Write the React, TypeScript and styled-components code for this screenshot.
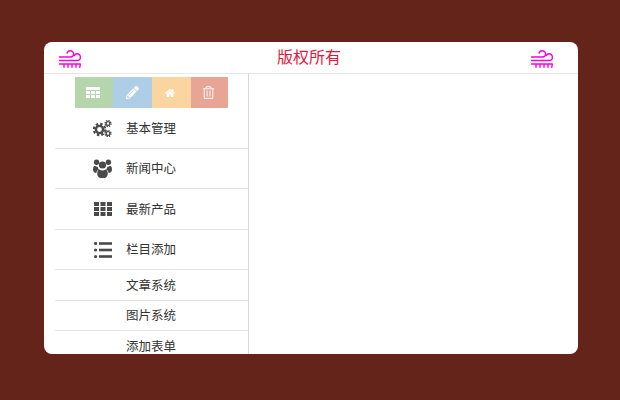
import React from "react";
import styled, { createGlobalStyle } from "styled-components";
import { FaPencilAlt, FaHome, FaRegTrashAlt } from "react-icons/fa";

const Global = createGlobalStyle`
  html, body { margin: 0; padding: 0; background: #64241a; }
  body { font-family: "Liberation Sans", "Noto Sans CJK SC", sans-serif; }
`;

const Page = styled.div`
  width: 620px;
  height: 400px;
  box-sizing: border-box;
  padding: 42px 42px 46px 44px;
  background: #64241a;
  display: flex;
`;

const Card = styled.div`
  flex: 1;
  background: #fff;
  border-radius: 8px;
  overflow: hidden;
  display: flex;
  flex-direction: column;
`;

const Header = styled.header`
  height: 32px;
  flex: none;
  box-sizing: border-box;
  border-bottom: 1px solid #e8e8e8;
  padding: 0 25px 0 15px;
  display: flex;
  align-items: center;
  justify-content: space-between;
`;

const Title = styled.h1`
  margin: 0 0 0 6px;
  font-size: 16px;
  font-weight: 400;
  line-height: 30px;
  color: #e2173c;
`;

const WindMark = styled.svg`
  width: 22px;
  height: 18px;
  flex: none;
  margin-top: 3px;
`;

const Body = styled.div`
  flex: 1;
  min-height: 0;
  display: flex;
`;

const Sidebar = styled.aside`
  width: 205px;
  box-sizing: border-box;
  padding: 3px 0 0 11px;
  border-right: 1px solid #d9d9d9;
  overflow: hidden;
`;

const Shortcuts = styled.div`
  display: flex;
  height: 31px;
  margin-left: 20px;
  width: 153px;
`;

const Shortcut = styled.div<{ $bg: string; $w: number; $size: number; $nudge?: number; $fade?: boolean }>`
  width: ${(p) => p.$w}px;
  box-sizing: border-box;
  padding-right: ${(p) => p.$nudge ?? 0}px;
  background: ${(p) => p.$bg};
  color: ${(p) => (p.$fade ? "rgba(255,255,255,0.75)" : "#fff")};
  display: flex;
  align-items: center;
  justify-content: center;
  font-size: ${(p) => p.$size}px;
`;

const MainRow = styled.div<{ $h: number }>`
  height: ${(p) => p.$h}px;
  box-sizing: border-box;
  border-bottom: 1px solid #e4e4e4;
  display: flex;
  align-items: center;
  color: #333;
  font-size: 12.5px;
`;

const IconSlot = styled.span`
  width: 71px;
  box-sizing: border-box;
  padding-right: 14px;
  display: flex;
  justify-content: flex-end;
  color: #4a4a4a;
`;

const RowLabel = styled.span`
  margin-bottom: 2px;
`;

const SubRow = styled.div<{ $h: number }>`
  height: ${(p) => p.$h}px;
  box-sizing: border-box;
  border-bottom: 1px solid #e4e4e4;
  padding-left: 71px;
  display: flex;
  align-items: center;
  color: #333;
  font-size: 12.5px;
`;

const Content = styled.main`
  flex: 1;
`;

const Wind = () => (
  <WindMark viewBox="0 0 22 18" fill="none" stroke="#fa00e0" strokeWidth="1.4">
    <path d="M0 7H11.5C13.2 7 14.6 5.8 14.6 4C14.6 2.2 13.2 0.8 11.4 0.8C9.6 0.8 8.2 2 8 3.6" />
    <path d="M0 10.5H18C20 10.5 21.4 9 21.4 7.2C21.4 5.2 19.9 3.8 18.2 3.8C16.6 3.8 15.4 4.8 15.1 6.2" />
    <path d="M0 14H21.8" />
    <path d="M5 14V17.8M9 14V17.8M13 14V17.8M17 14V17.8M21.4 14L20.6 17.8" />
  </WindMark>
);

const TableGlyph = () => (
  <svg width="14" height="11" viewBox="0 0 14 11" fill="currentColor">
    <rect x="0" y="0" width="14" height="3" />
    <rect x="0" y="4" width="4" height="3" />
    <rect x="5" y="4" width="4" height="3" />
    <rect x="10" y="4" width="4" height="3" />
    <rect x="0" y="8" width="4" height="3" />
    <rect x="5" y="8" width="4" height="3" />
    <rect x="10" y="8" width="4" height="3" />
  </svg>
);

const CogsGlyph = () => (
  <svg width="19" height="17" viewBox="0 0 19 17" fill="none" stroke="currentColor">
    <circle cx="6.5" cy="9.5" r="3.6" strokeWidth="2.4" />
    <circle cx="6.5" cy="9.5" r="5.7" strokeWidth="2.2" strokeDasharray="2.4 2.08" />
    <circle cx="15" cy="3.5" r="1.9" strokeWidth="1.4" />
    <circle cx="15" cy="3.5" r="3" strokeWidth="1.3" strokeDasharray="1.3 1.06" />
    <circle cx="15" cy="13.5" r="1.9" strokeWidth="1.4" />
    <circle cx="15" cy="13.5" r="3" strokeWidth="1.3" strokeDasharray="1.3 1.06" />
  </svg>
);

const UsersGlyph = () => (
  <svg width="19" height="19" viewBox="0 0 19 19" fill="currentColor">
    <circle cx="3.6" cy="3.2" r="2.7" />
    <circle cx="15.4" cy="3.2" r="2.7" />
    <circle cx="9.5" cy="6" r="3.6" />
    <path d="M0 10.5C0 8.5 .8 6.8 2 6.8C2.8 7.6 3.6 7.9 4.6 7.8C4.8 9 5.3 9.9 6 10.6C4.6 11.2 3.6 12.5 3.3 14C1.4 14 0 12.8 0 10.5Z" />
    <path d="M19 10.5C19 8.5 18.2 6.8 17 6.8C16.2 7.6 15.4 7.9 14.4 7.8C14.2 9 13.7 9.9 13 10.6C14.4 11.2 15.4 12.5 15.7 14C17.6 14 19 12.8 19 10.5Z" />
    <path d="M4.2 14.6C4.2 12 5.2 10.4 6.8 10.4C7.5 11 8.4 11.4 9.5 11.4C10.6 11.4 11.5 11 12.2 10.4C13.8 10.4 14.8 12 14.8 14.6C14.8 17 13.4 19 11.8 19H7.2C5.6 19 4.2 17 4.2 14.6Z" />
  </svg>
);

const GridGlyph = () => (
  <svg width="18" height="14" viewBox="0 0 18 14" fill="currentColor">
    {[0, 5, 10].map((y) =>
      [0, 6.5, 13].map((x) => <rect key={`${x}-${y}`} x={x} y={y} width="5" height="4" />)
    )}
  </svg>
);

const ListGlyph = () => (
  <svg width="18" height="16" viewBox="0 0 18 16" fill="currentColor">
    {[0, 6.5, 13].map((y) => (
      <g key={y}>
        <circle cx="1.6" cy={y + 1.5} r="1.6" />
        <rect x="5" y={y + 0.2} width="13" height="2.6" />
      </g>
    ))}
  </svg>
);

const mains = [
  { label: "基本管理", icon: <CogsGlyph />, h: 41 },
  { label: "新闻中心", icon: <UsersGlyph />, h: 40 },
  { label: "最新产品", icon: <GridGlyph />, h: 41 },
  { label: "栏目添加", icon: <ListGlyph />, h: 40 },
];
const subs = [
  { label: "文章系统", h: 31 },
  { label: "图片系统", h: 30 },
  { label: "添加表单", h: 31 },
];

export default function App() {
  return (
    <Page>
      <Global />
      <Card>
        <Header>
          <Wind />
          <Title>版权所有</Title>
          <Wind />
        </Header>
        <Body>
          <Sidebar>
            <Shortcuts>
              <Shortcut $bg="#b5d6ad" $w={38} $size={13} $nudge={2}><TableGlyph /></Shortcut>
              <Shortcut $bg="#aecde6" $w={39} $size={13}><FaPencilAlt /></Shortcut>
              <Shortcut $bg="#fbd5a0" $w={39} $size={10} $nudge={3}><FaHome /></Shortcut>
              <Shortcut $bg="#e8a596" $w={37} $size={13} $nudge={2} $fade><FaRegTrashAlt /></Shortcut>
            </Shortcuts>
            {mains.map((m) => (
              <MainRow key={m.label} $h={m.h}>
                <IconSlot>{m.icon}</IconSlot>
                <RowLabel>{m.label}</RowLabel>
              </MainRow>
            ))}
            {subs.map((s) => (
              <SubRow key={s.label} $h={s.h}><RowLabel>{s.label}</RowLabel></SubRow>
            ))}
          </Sidebar>
          <Content />
        </Body>
      </Card>
    </Page>
  );
}
